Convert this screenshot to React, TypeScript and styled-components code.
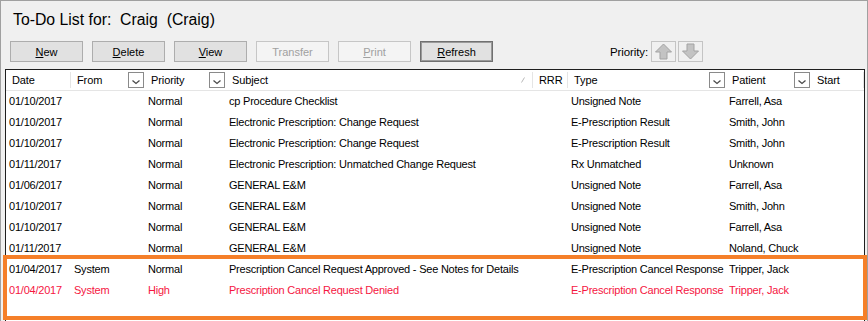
import React from "react";
import styled, { createGlobalStyle } from "styled-components";

const GlobalStyle = createGlobalStyle`
  html, body { margin: 0; padding: 0; background: #f0f0f0; }
  body { font-family: "Liberation Sans", Arial, sans-serif; font-size: 11px; color: #000; }
`;

const Window = styled.div`
  position: relative;
  width: 868px;
  height: 321px;
  box-sizing: border-box;
  border-top: 1px solid #a0a0a0;
  border-left: 1px solid #a0a0a0;
  border-right: 1px solid #a0a0a0;
  background: #f0f0f0;
  overflow: hidden;
  display: flex;
  flex-direction: column;
`;

const Title = styled.div`
  padding: 9px 0 0 12px;
  height: 20px;
  line-height: 20px;
  font-size: 15.8px;
  white-space: pre;
`;

const Toolbar = styled.div`
  display: flex;
  align-items: center;
  gap: 9px;
  margin-top: 11px;
  padding-left: 9px;
  height: 21px;
`;

const Button = styled.button<{ $default?: boolean }>`
  width: 73px;
  height: 21px;
  box-sizing: border-box;
  margin: 0;
  padding: 0;
  font-family: inherit;
  font-size: 11px;
  color: ${({ disabled }) => (disabled ? "#a0a0a0" : "#000")};
  background: ${({ disabled }) => (disabled ? "#f4f4f4" : "#e1e1e1")};
  border: 1px solid
    ${({ disabled, $default }) => (disabled ? "#c6c6c6" : $default ? "#707070" : "#adadad")};
  ${({ $default }) => ($default ? "box-shadow: inset 0 0 0 1px #9a9a9a;" : "")}
`;

const PriorityGroup = styled.div`
  display: flex;
  align-items: center;
  gap: 2px;
  margin-left: 108px;
`;

const PriorityLabel = styled.span`
  font-size: 11.5px;
  letter-spacing: -0.1px;
  margin-right: 1px;
`;

const ArrowBox = styled.div`
  width: 25px;
  height: 21px;
  box-sizing: border-box;
  border: 1px solid #c4c4c4;
  background: #f0f0f0;
  display: flex;
  align-items: center;
  justify-content: center;
`;

const List = styled.div`
  margin: 7px 0 0 4px;
  width: 860px;
  flex: 1;
  box-sizing: border-box;
  border: 1px solid #1e1e1e;
  border-bottom: none;
  background: #fff;
  overflow: hidden;
`;

const HeaderRow = styled.div`
  display: flex;
  height: 21px;
  box-sizing: border-box;
  border-bottom: 1px solid #e5e5e5;
  background: #fff;
`;

const HeaderCell = styled.div<{ $w: number; $sep?: boolean }>`
  position: relative;
  width: ${({ $w }) => $w}px;
  flex: none;
  display: flex;
  align-items: center;
  padding-left: 6px;
  box-sizing: border-box;
  white-space: nowrap;
  letter-spacing: -0.1px;
  &::after {
    content: "";
    display: ${({ $sep }) => ($sep ? "block" : "none")};
    position: absolute;
    right: 0;
    top: 2px;
    bottom: 2px;
    width: 1px;
    background: #e5e5e5;
  }
`;

const HeaderLabel = styled.span`
  flex: 1;
`;

const DropBox = styled.div`
  width: 16px;
  height: 16px;
  box-sizing: border-box;
  border: 1px solid #8a8a8a;
  background: #fff;
  margin-right: 1px;
  display: flex;
`;

const SortMark = styled.svg`
  margin-right: 8px;
`;

const Row = styled.div<{ $alert?: boolean }>`
  display: flex;
  height: 21px;
  line-height: 21px;
  color: ${({ $alert }) => ($alert ? "#f5163f" : "#000")};
`;

const Cell = styled.div<{ $w: number }>`
  width: ${({ $w }) => $w}px;
  flex: none;
  padding-left: 3px;
  box-sizing: border-box;
  white-space: nowrap;
  letter-spacing: -0.22px;
`;

const Highlight = styled.div`
  position: absolute;
  left: 2px;
  top: 254px;
  width: 864px;
  height: 65px;
  box-sizing: border-box;
  border: 4px solid #f57f29;
  pointer-events: none;
`;

const columns = [
  { key: "date", label: "Date", w: 65, sep: true },
  { key: "from", label: "From", w: 74, drop: true },
  { key: "priority", label: "Priority", w: 81, drop: true },
  { key: "subject", label: "Subject", w: 307, sep: true, sort: true },
  { key: "rrr", label: "RRR", w: 35, sep: true },
  { key: "type", label: "Type", w: 158, drop: true },
  { key: "patient", label: "Patient", w: 85, drop: true },
  { key: "start", label: "Start", w: 53, sep: true },
];

type Item = {
  date: string;
  from?: string;
  priority: string;
  subject: string;
  type: string;
  patient: string;
  alert?: boolean;
};

const items: Item[] = [
  { date: "01/10/2017", priority: "Normal", subject: "cp Procedure Checklist", type: "Unsigned Note", patient: "Farrell, Asa" },
  { date: "01/10/2017", priority: "Normal", subject: "Electronic Prescription: Change Request", type: "E-Prescription Result", patient: "Smith, John" },
  { date: "01/10/2017", priority: "Normal", subject: "Electronic Prescription: Change Request", type: "E-Prescription Result", patient: "Smith, John" },
  { date: "01/11/2017", priority: "Normal", subject: "Electronic Prescription: Unmatched Change Request", type: "Rx Unmatched", patient: "Unknown" },
  { date: "01/06/2017", priority: "Normal", subject: "GENERAL E&M", type: "Unsigned Note", patient: "Farrell, Asa" },
  { date: "01/10/2017", priority: "Normal", subject: "GENERAL E&M", type: "Unsigned Note", patient: "Smith, John" },
  { date: "01/10/2017", priority: "Normal", subject: "GENERAL E&M", type: "Unsigned Note", patient: "Farrell, Asa" },
  { date: "01/11/2017", priority: "Normal", subject: "GENERAL E&M", type: "Unsigned Note", patient: "Noland, Chuck" },
  { date: "01/04/2017", from: "System", priority: "Normal", subject: "Prescription Cancel Request Approved - See Notes for Details", type: "E-Prescription Cancel Response", patient: "Tripper, Jack" },
  { date: "01/04/2017", from: "System", priority: "High", subject: "Prescription Cancel Request Denied", type: "E-Prescription Cancel Response", patient: "Tripper, Jack", alert: true },
];

const Chevron = () => (
  <svg width="14" height="14" viewBox="0 0 14 14">
    <path d="M3.5 7.5 L7 10.5 L10.5 7.5" fill="none" stroke="#4a4a4a" strokeWidth="1.3" />
  </svg>
);

const Arrow = ({ down }: { down?: boolean }) => (
  <svg width="19" height="17" viewBox="0 0 19 17" style={down ? { transform: "scaleY(-1)" } : undefined}>
    <path
      d="M9.5 1 L17.5 9 L13 9 L13 16 L6 16 L6 9 L1.5 9 Z"
      fill="#c3c3c3"
      stroke="#a3a3a3"
      strokeWidth="1"
      strokeLinejoin="round"
    />
  </svg>
);

export default function App() {
  return (
    <Window>
      <GlobalStyle />
      <Title>To-Do List for:  Craig  (Craig)</Title>
      <Toolbar>
        <Button><u>N</u>ew</Button>
        <Button><u>D</u>elete</Button>
        <Button><u>V</u>iew</Button>
        <Button disabled>Transfer</Button>
        <Button disabled><u>P</u>rint</Button>
        <Button $default><u>R</u>efresh</Button>
        <PriorityGroup>
          <PriorityLabel>Priority:</PriorityLabel>
          <ArrowBox><Arrow /></ArrowBox>
          <ArrowBox><Arrow down /></ArrowBox>
        </PriorityGroup>
      </Toolbar>
      <List>
        <HeaderRow>
          {columns.map((c) => (
            <HeaderCell key={c.key} $w={c.w} $sep={c.sep}>
              <HeaderLabel>{c.label}</HeaderLabel>
              {c.sort && (
                <SortMark width="4" height="6" viewBox="0 0 4 6">
                  <path d="M0.5 5.5 L3.5 0.5" stroke="#b8b8b8" strokeWidth="1" />
                </SortMark>
              )}
              {c.drop && (
                <DropBox>
                  <Chevron />
                </DropBox>
              )}
            </HeaderCell>
          ))}
        </HeaderRow>
        {items.map((it, i) => (
          <Row key={i} $alert={it.alert}>
            <Cell $w={65}>{it.date}</Cell>
            <Cell $w={74}>{it.from ?? ""}</Cell>
            <Cell $w={81}>{it.priority}</Cell>
            <Cell $w={307}>{it.subject}</Cell>
            <Cell $w={35}></Cell>
            <Cell $w={158}>{it.type}</Cell>
            <Cell $w={85}>{it.patient}</Cell>
            <Cell $w={53}></Cell>
          </Row>
        ))}
      </List>
      <Highlight />
    </Window>
  );
}
